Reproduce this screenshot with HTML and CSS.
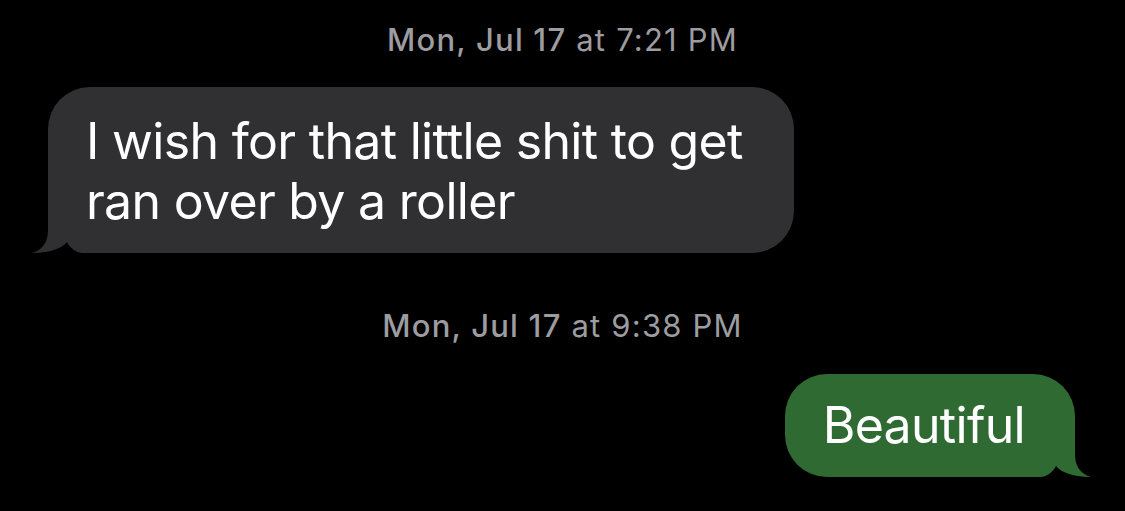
FILE: index.html
```html
<!DOCTYPE html>
<html lang="en">
<head>
<meta charset="utf-8">
<title>Messages</title>
<link rel="stylesheet" href="styles.css">
</head>
<body>
<main class="thread">
  <div class="stamp"><b>Mon, Jul 17</b> at 7:21 PM</div>
  <div class="row row-in">
    <div class="bubble bubble-in">
      <svg class="tail tail-in" width="60" height="50" viewBox="0 0 60 50" aria-hidden="true">
        <rect x="16" y="0" width="44" height="50" fill="#000"/>
        <path d="M16,0 H60 V50 H51 C44,50 38,45 35,39 C30,45 20,49.5 0,50 C10,47 16,40 16,27 Z" fill="#303033"/>
      </svg>
      <span class="text">I wish for that little shit to get ran over by a roller</span>
    </div>
  </div>
  <div class="stamp stamp-second"><b>Mon, Jul 17</b> at 9:38 PM</div>
  <div class="row row-out">
    <div class="bubble bubble-out">
      <svg class="tail tail-out" width="60" height="50" viewBox="0 0 60 50" aria-hidden="true">
        <rect x="16" y="0" width="44" height="50" fill="#000"/>
        <path d="M16,0 H60 V50 H51 C44,50 38,45 35,39 C30,45 20,49.5 0,50 C10,47 16,40 16,27 Z" fill="#2e6a31"/>
      </svg>
      <span class="text">Beautiful</span>
    </div>
  </div>
</main>
</body>
</html>
```

FILE: styles.css
```css
html, body {
  margin: 0;
  padding: 0;
  background: #000;
}

body {
  font-family: Inter, "Noto Sans", "Liberation Sans", sans-serif;
  color: #fff;
  width: 1125px;
  height: 511px;
  overflow: hidden;
}

.thread {
  display: flex;
  flex-direction: column;
  padding-top: 20px;
}

.stamp {
  text-align: center;
  font-size: 31px;
  line-height: 40px;
  letter-spacing: 1.2px;
  color: #9c9ca1;
  font-weight: 400;
}

.stamp b {
  font-weight: 500;
}

.stamp-second {
  margin-top: 53px;
}

.row {
  display: flex;
}

.row-in {
  justify-content: flex-start;
  padding-left: 48px;
  margin-top: 27px;
}

.row-out {
  justify-content: flex-end;
  padding-right: 50px;
  margin-top: 28px;
}

.bubble {
  position: relative;
  font-size: 50px;
  line-height: 60px;
  letter-spacing: -0.7px;
  border-radius: 42px;
  box-sizing: border-box;
}

.bubble .text {
  position: relative;
  z-index: 1;
}

.bubble-in {
  width: 746px;
  background: #303033;
  padding: 24px 38px 22px 38px;
  border-bottom-left-radius: 0;
}

.bubble-out {
  background: #2e6a31;
  padding: 21px 50px 22px 38px;
  border-bottom-right-radius: 0;
}

.tail {
  position: absolute;
  bottom: 0;
  display: block;
}

.tail-in {
  left: -16px;
}

.tail-out {
  right: -16px;
  transform: scaleX(-1);
}
```
